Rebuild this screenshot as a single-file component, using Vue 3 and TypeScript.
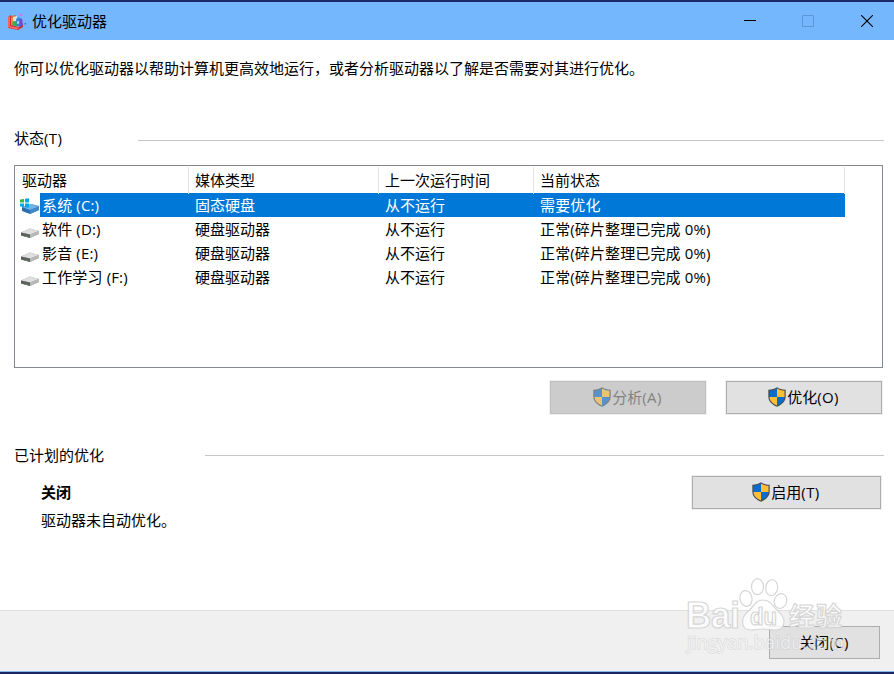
<script setup lang="ts">
interface Drive {
  name: string
  media: string
  lastRun: string
  status: string
  system?: boolean
}

const columns: string[] = ['驱动器', '媒体类型', '上一次运行时间', '当前状态']

const drives: Drive[] = [
  { name: '系统 (C:)', media: '固态硬盘', lastRun: '从不运行', status: '需要优化', system: true },
  { name: '软件 (D:)', media: '硬盘驱动器', lastRun: '从不运行', status: '正常(碎片整理已完成 0%)' },
  { name: '影音 (E:)', media: '硬盘驱动器', lastRun: '从不运行', status: '正常(碎片整理已完成 0%)' },
  { name: '工作学习 (F:)', media: '硬盘驱动器', lastRun: '从不运行', status: '正常(碎片整理已完成 0%)' },
]
</script>

<template>
  <div class="window">
    <svg width="0" height="0" class="defs">
      <symbol id="shield" viewBox="0 0 18 20">
        <path d="M9 .3C6.700 1.900 4 2.700.3 2.700V9.500C.3 14.500 4 17.500 9 19.800c5-2.300 8.700-5.300 8.700-10.300V2.700C14 2.700 11.300 1.900 9 .3z" fill="#4a4f55" />
        <path d="M9 1.600C7 2.900 4.700 3.600 1.500 3.800V10H9z" fill="#0a6ccc" />
        <path d="M9 1.600c2 1.300 4.300 2 7.500 2.200V10H9z" fill="#ffbe35" />
        <path d="M1.500 10H9v8.500C4.700 16.500 1.700 13.900 1.500 10z" fill="#ffbe35" />
        <path d="M16.500 10H9v8.500c4.300-2 7.300-4.600 7.500-8.500z" fill="#0a6ccc" />
      </symbol>
    </svg>

    <header class="titlebar">
      <svg class="app-icon" width="20" height="20" viewBox="0 0 20 20">
        <path d="M1 5l3-2 1 10 6 2 5-3v3l-5 3-10-2z" fill="#cf2e33" />
        <path d="M1 5l2-1v11l-2 1z" fill="#f0675c" />
        <path d="M4 4l5-1v3L4 7z" fill="#c9773a" />
        <path d="M4 6h3v7H4z" fill="#f08b4a" />
        <path d="M6 5l4-1v5H6z" fill="#dfe6d8" />
        <path d="M5.500 9.500l5-.5v5l-5-.5z" fill="#35ad4e" />
        <path d="M9 7l3-2 2 2v7l-4 .5z" fill="#3285dc" />
        <path d="M13 7l2-.5 1 6.500-3 2z" fill="#754ac8" />
        <path d="M3 14l7 1.500 2-1-1.500 3L3 16z" fill="#f2696a" />
        <path d="M12 1l4 2-1.500 1.500L12 3z" fill="#c77be8" />
        <path d="M10 9.500l2-.5v2.500l-2 .5z" fill="#9cdcff" />
        <path d="M17.500 11H19v1.500h-1.500z" fill="#2378c7" />
      </svg>
      <h1 class="title">优化驱动器</h1>
      <div class="controls">
        <svg width="12" height="12" viewBox="0 0 12 12"><path d="M0 5.500h12" stroke="#000" /></svg>
        <svg width="12" height="12" viewBox="0 0 12 12"><path d="M.5.5h11v11H.5z" fill="none" stroke="#5b97d6" /></svg>
        <svg width="12" height="12" viewBox="0 0 12 12"><path d="M0 0l12 12M12 0L0 12" stroke="#000" stroke-width="1.100" /></svg>
      </div>
    </header>

    <main class="content">
      <p class="intro">你可以优化驱动器以帮助计算机更高效地运行，或者分析驱动器以了解是否需要对其进行优化。</p>

      <h2 class="section status-heading"><span>状态<i>(T)</i></span></h2>

      <div class="list">
        <div class="row head">
          <span v-for="c in columns" :key="c">{{ c }}</span>
        </div>
        <div v-for="d in drives" :key="d.name" class="row" :class="{ selected: d.system }">
          <span class="drive">
            <svg width="20" height="20" viewBox="0 0 20 20">
              <template v-if="d.system">
                <path d="M2 11l9-3 8 2v4l-9 4-8-3z" fill="#2b6fae" />
                <path d="M2 11l9-3 8 2.500-9 3.500z" fill="#71b3e6" />
                <path d="M10 14l9-3.500V14l-9 4z" fill="#4089c9" />
                <path d="M0 3.500l4-.6V6.500H0z" fill="#39b54a" />
                <path d="M5 2.800l4-.6v4.300H5zM0 7.500h4v3.600l-4-.6zM5 7.500h4v4.300L5 11.200z" fill="#08a8e8" />
              </template>
              <template v-else>
                <path d="M1 12.500l9-4 9 2.500v3L10 18l-9-2.500z" fill="#9a9a9a" />
                <path d="M1 12.500l9-4 9 2.500-9 3.500z" fill="#dedede" />
                <path d="M10 14.500l9-3.500v3L10 18z" fill="#b8b8ba" />
                <path d="M1 12.500l9 2V18l-9-2.500z" fill="#5d5f5e" />
                <path d="M6 15.500l1.500.3v1L6 16.500z" fill="#53a55a" />
              </template>
            </svg>
            <b>{{ d.name }}</b>
          </span>
          <span>{{ d.media }}</span>
          <span>{{ d.lastRun }}</span>
          <span class="status">{{ d.status }}</span>
        </div>
      </div>

      <div class="actions">
        <button class="btn" disabled><svg width="18" height="20"><use href="#shield" /></svg><span>分析<i>(A)</i></span></button>
        <button class="btn"><svg width="18" height="20"><use href="#shield" /></svg><span>优化<i>(O)</i></span></button>
      </div>

      <h2 class="section plan-heading"><span>已计划的优化</span></h2>

      <div class="plan">
        <div>
          <strong class="plan-state">关闭</strong>
          <p class="plan-note">驱动器未自动优化。</p>
        </div>
        <button class="btn enable"><svg width="18" height="20"><use href="#shield" /></svg><span>启用<i>(T)</i></span></button>
      </div>
    </main>

    <footer class="footer">
      <button class="btn close"><span>关闭<i>(C)</i></span></button>
    </footer>

    <svg class="watermark" width="170" height="84" viewBox="0 0 170 84">
      <g class="mark">
        <ellipse cx="75.500" cy="8.700" rx="6" ry="8" />
        <ellipse cx="89.700" cy="9.700" rx="6" ry="8" transform="rotate(8 89.700 9.700)" />
        <ellipse cx="64" cy="20.500" rx="6" ry="8" transform="rotate(-10 64 20.500)" />
        <ellipse cx="98.500" cy="23" rx="6.200" ry="7.500" transform="rotate(20 98.500 23)" />
        <path d="M81 22c7 0 9 5 13 9 4 4 8 7 8 13s-4 8-9 8c-4 0-8-1-12-1s-8 1-12 1c-5 0-8.500-3-8.500-8 0-6 4-9 8-13 4-4 5.500-9 12.500-9z" />
        <text x="4" y="50" class="latin" textLength="54" lengthAdjust="spacingAndGlyphs">Bai</text>
        <text x="68" y="46.500" class="du" textLength="27" lengthAdjust="spacingAndGlyphs">du</text>
        <text x="107" y="48" class="cjk" textLength="53">经验</text>
        <text x="5" y="71" class="url" textLength="157">jingyan.baidu.com</text>
      </g>
    </svg>
  </div>
</template>

<style>
body {
  margin: 0;
  background: #fff;
}
</style>

<style scoped>
.window {
  position: relative;
  box-sizing: border-box;
  display: flex;
  flex-direction: column;
  width: 894px;
  height: 674px;
  overflow: hidden;
  border-top: 2px solid #1d286b;
  border-bottom: 2px solid #1a2564;
  background: #fff;
  color: #000;
  font: 15px/20px "Open Sans", "Noto Sans CJK SC", sans-serif;
}
.defs {
  position: absolute;
}
h1, h2, p {
  margin: 0;
  font-size: 15px;
  font-weight: inherit;
}
i, b {
  font-style: normal;
  font-weight: inherit;
}
i {
  letter-spacing: 0.4px;
}
.titlebar {
  display: flex;
  align-items: center;
  flex: none;
  height: 38px;
  padding: 0 21px 0 7px;
  background: #74b7fc;
}
.app-icon {
  margin: 1px 5px 0 0;
}
.controls {
  display: flex;
  gap: 47px;
  margin-left: auto;
}
.controls svg:first-child {
  margin-right: -1px;
}
.content {
  display: flex;
  flex-direction: column;
  flex: 1;
  padding: 18px 10px 0 14px;
}
.section {
  display: flex;
  align-items: center;
}
.section::after {
  content: "";
  flex: 1;
  height: 1px;
  background: #c6c6c6;
}
.status-heading {
  margin-top: 50px;
}
.status-heading span {
  width: 124px;
}
.status-heading::after {
  margin-top: 4px;
}
.plan-heading {
  margin-top: 31px;
}
.plan-heading span {
  width: 191px;
}
.list {
  box-sizing: border-box;
  height: 203px;
  margin: 17px 1px 0 0;
  border: 1px solid #828790;
}
.row {
  display: grid;
  grid-template-columns: 174px 190px 155px 311px;
  width: 830px;
  height: 24px;
  line-height: 24px;
  white-space: nowrap;
}
.row > span {
  padding-left: 6px;
}
.row.head {
  height: 27px;
}
.head > span {
  margin-top: 1px;
  line-height: 27px;
  border-right: 1px solid #e3e3e3;
}
.head > span:first-child {
  padding-left: 7px;
}
.row > .drive {
  display: flex;
  padding-left: 5px;
}
.drive svg {
  margin-top: 3px;
}
.drive b {
  flex: 1;
  padding-left: 2px;
  letter-spacing: 0.15px;
}
.row > .status {
  letter-spacing: 0.13px;
}
.selected {
  color: #fff;
  background: linear-gradient(90deg, #fff 25px, #0078d7 25px);
}
.actions {
  display: flex;
  justify-content: flex-end;
  gap: 20px;
  margin: 13px 2px 0 0;
}
.btn {
  box-sizing: border-box;
  display: flex;
  align-items: center;
  justify-content: center;
  gap: 1px;
  width: 156px;
  height: 33px;
  padding: 0 1px 2px 0;
  border: 1px solid #adadad;
  box-shadow: 0 0 0 1px #f0f0f0;
  background: #e1e1e1;
  color: #000;
  font: inherit;
}
.btn:disabled {
  border-color: #bfbfbf;
  background: #ccc;
  color: #838383;
}
.btn:disabled svg {
  opacity: 0.6;
}
.plan {
  display: flex;
  justify-content: space-between;
  padding: 11px 3px 0 27px;
}
.plan-state {
  display: block;
  margin-top: 6px;
  font-weight: 700;
}
.plan-note {
  margin-top: 8px;
}
.enable {
  width: 189px;
}
.footer {
  box-sizing: border-box;
  display: flex;
  justify-content: flex-end;
  flex: none;
  height: 62px;
  padding: 15px 14px 0 0;
  border-top: 1px solid #dfdfdf;
  border-bottom: 1px solid #86b9eb;
  background: #f0f0f0;
}
.close {
  width: 111px;
}
.watermark {
  position: absolute;
  left: 682px;
  top: 576px;
  pointer-events: none;
}
.mark {
  fill: rgba(255, 255, 255, 0.8);
  stroke: #d6d6d6;
  stroke-width: 1.2;
}
.latin, .du, .cjk {
  font-family: "Liberation Sans", "Noto Sans CJK SC", sans-serif;
  font-weight: 700;
}
.latin {
  font-size: 36px;
}
.du {
  font-size: 23px;
}
.cjk {
  font-size: 26px;
}
.url {
  font-size: 18px;
  fill: rgba(255, 255, 255, 0.6);
  stroke: rgba(190, 190, 190, 0.4);
  stroke-width: 1.5;
  paint-order: stroke;
}
</style>
